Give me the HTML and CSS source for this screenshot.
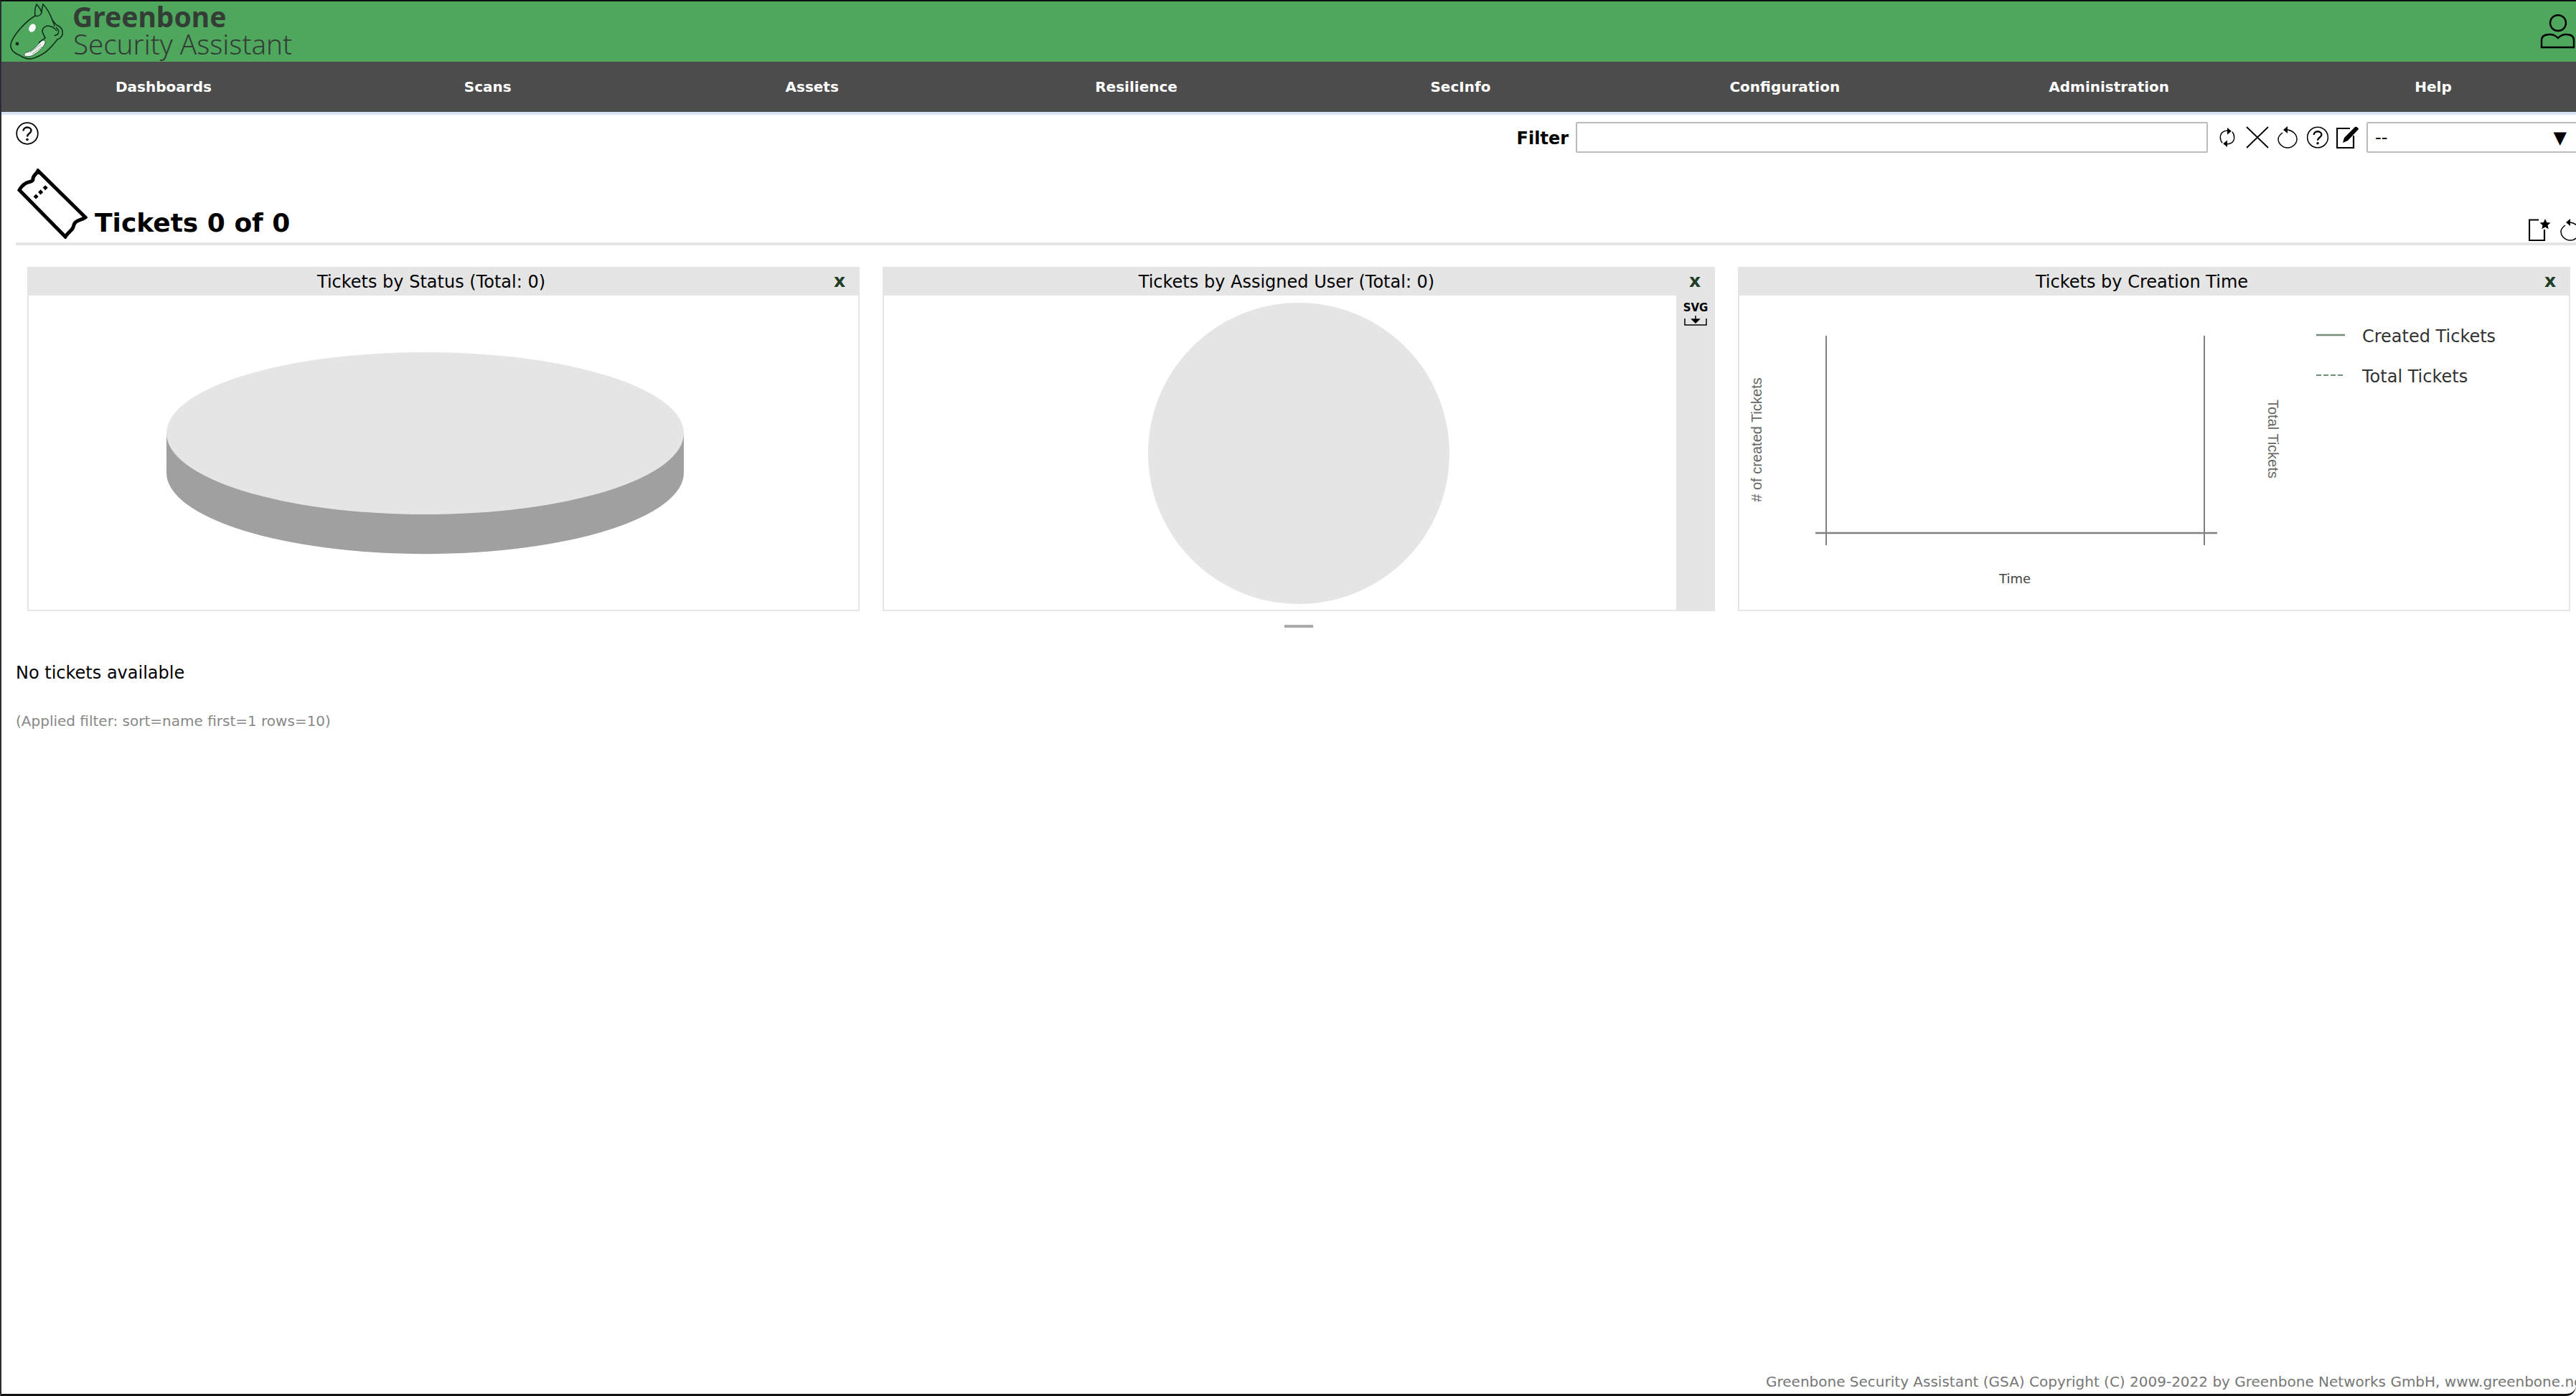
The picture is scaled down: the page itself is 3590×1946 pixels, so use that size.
FILE: index.html
```html
<!DOCTYPE html>
<html lang="en">
<head>
  <meta charset="utf-8">
  <title>Greenbone Security Assistant</title>
  <link rel="stylesheet" href="styles.css">
</head>
<body>
  <div class="app">
    <header class="topbar">
      <div class="brand">
        <svg class="logo" viewBox="12 3 78 81" fill="none" stroke="#12301a" stroke-width="1.600">
          <path d="M49 21c-1-6 0-12 2-16 3 3 6 7 7 12 0-4 1-8 2-12 6 6 10 14 13 22 2 3 4 5 6 7 4 1 8 5 8 9 1 5-2 9-7 11-4 5-9 12-17 18-6 4-13 8-20 9-8 1-13-4-18-6-5-2-9-6-10-11-1-6 4-13 9-20 7-9 15-17 25-23z"/>
          <path d="M49 21c3 1 7 0 9-4M73 27c1 3 3 6 3 9M78 37c3 3 5 5 3 9-2 3-4 1-5 3"/>
          <path d="M79 42c-3-4-8-7-13-7-4 1-7 4-7 8 1 4 3 6 4 9-3 2-7 4-9 7"/>
          <ellipse cx="45" cy="38" rx="4.500" ry="6" transform="rotate(28 45 38)" fill="#fff" stroke="none"/>
          <circle cx="24" cy="60" r="2.400" fill="#12301a" stroke="none"/>
          <path d="M37 72c7-1 14-9 20-15 3-3 7-2 6 2-2 6-10 13-17 17-5 3-14 2-12-1 0-2 1-3 3-3z" fill="#eef5ee" stroke="#2a5a36" stroke-width="1"/>
          <path d="M42 72l15-11M45 74l14-10" stroke="#8aa58f" stroke-width="1"/>
        </svg>
        <div class="brand-text">
          <div class="brand-name">Greenbone</div>
          <div class="brand-sub">Security Assistant</div>
        </div>
      </div>
      <svg class="user-icon" viewBox="0 0 49 48" fill="none" stroke="#000" stroke-width="2.400">
        <circle cx="25" cy="12" r="11"/>
        <path d="M2 46V36c0-6 6-8 12-8 4 0 8 2 11 5 3-3 7-5 11-5 6 0 11 2 11 8v10z"/>
      </svg>
    </header>

    <nav class="mainnav">
      <a>Dashboards</a>
      <a>Scans</a>
      <a>Assets</a>
      <a>Resilience</a>
      <a>SecInfo</a>
      <a>Configuration</a>
      <a>Administration</a>
      <a>Help</a>
    </nav>

    <div class="toolbar">
      <svg class="icon icon-help" viewBox="0 0 32 32" fill="none" stroke="#000" stroke-width="1.800">
        <circle cx="16" cy="16" r="14.800"/>
        <path d="M10.500 12.500c0-3 2.500-5 5.500-5s5.500 2 5.500 4.500c0 4-5.500 4-5.500 8.500" stroke-width="2.400"/>
        <circle cx="16" cy="24.500" r="1.800" fill="#000" stroke="none"/>
      </svg>
      <div class="filter">
        <label class="filter-label">Filter</label>
        <div class="filter-input"></div>
        <div class="filter-icons">
          <svg class="icon icon-f1" viewBox="0 0 24 32" fill="none" stroke="#000" stroke-width="1.500">
            <path d="M15 7C8 5 2 9 2 16c0 3 1 6 3 8M9 25c7 2 13-2 13-9 0-3-1-6-3-8"/>
            <path d="M12 2v10l6-5zM12 30V20l-6 5z" fill="#000" stroke="none"/>
          </svg>
          <svg class="icon icon-f2" viewBox="0 0 32 31" stroke="#000" stroke-width="1.800">
            <path d="M1 1l30 29M31 1L1 30"/>
          </svg>
          <svg class="icon icon-f3" viewBox="0 0 28 31" fill="none" stroke="#000" stroke-width="1.500">
            <path d="M7 9C3 12 1 15 1 18c0 6 6 12 13 12s13-6 13-12c0-7-6-12-13-13"/>
            <path d="M14 0v10L8 5z" fill="#000" stroke="none"/>
          </svg>
          <svg class="icon icon-f4" viewBox="0 0 32 32" fill="none" stroke="#000" stroke-width="1.600">
            <circle cx="16" cy="16" r="14.800"/>
            <path d="M10.500 12.500c0-3 2.500-5 5.500-5s5.500 2 5.500 4.500c0 4-5.500 4-5.500 8.500" stroke-width="2.400"/>
            <circle cx="16" cy="24.500" r="1.800" fill="#000" stroke="none"/>
          </svg>
          <svg class="icon icon-f5" viewBox="0 0 32 31" fill="none" stroke="#000" stroke-width="2.200">
            <path d="M19 3H1v27h23V13"/>
            <path d="M9 23l2-7L26 1c1-1 5 1 5 3L16 20z" fill="#000" stroke="none"/>
          </svg>
        </div>
        <div class="filter-select"><span>--</span><span class="select-arrow">▼</span></div>
      </div>
    </div>

    <div class="section-head">
      <div class="section-title">
        <svg class="ticket-icon" viewBox="0 0 98 98" fill="none" stroke="#000" stroke-width="5">
          <path d="M29 3c-2 5-8 7-7 12 0 4-7 3-11 6-3 2-6 5-8 9l64 65c2-3 5-6 8-9 5-4 2-7 6-11 4-4 9-3 14-7z"/>
          <path d="M41 25L24 41" stroke-dasharray="5 4" stroke-width="5"/>
        </svg>
        <h1>Tickets 0 of 0</h1>
      </div>
      <div class="section-tools">
        <svg class="icon icon-new" viewBox="0 0 31 31" fill="none" stroke="#000" stroke-width="2.200">
          <path d="M14 1.500H1V30h21V15"/>
          <path d="M23 0l2.200 5 5.300.4-4 3.600 1.200 5.200-4.700-2.800-4.700 2.800 1.200-5.200-4-3.600 5.300-.4z" fill="#000" stroke="none"/>
        </svg>
        <svg class="icon icon-reload" viewBox="0 0 28 31" fill="none" stroke="#000" stroke-width="1.500">
          <path d="M7 9C3 12 1 15 1 18c0 6 6 12 13 12s13-6 13-12c0-7-6-12-13-13"/>
          <path d="M14 0v10L8 5z" fill="#000" stroke="none"/>
        </svg>
      </div>
    </div>

    <div class="dashboard">
      <section class="panel">
        <div class="panel-head"><span class="panel-title">Tickets by Status (Total: 0)</span><span class="panel-close">x</span></div>
        <div class="panel-body">
          <svg class="chart" viewBox="0 0 1156 438">
            <path d="M192 192v55a360 113 0 0 0 721 0v-55z" fill="#a0a0a0"/>
            <ellipse cx="552.500" cy="192" rx="360.500" ry="113" fill="#e5e5e5"/>
          </svg>
        </div>
      </section>

      <section class="panel">
        <div class="panel-head"><span class="panel-title">Tickets by Assigned User (Total: 0)</span><span class="panel-close">x</span></div>
        <div class="panel-body panel-body-split">
          <svg class="chart" viewBox="0 0 1104 438">
            <circle cx="578" cy="220" r="210" fill="#e5e5e5"/>
          </svg>
          <div class="panel-side">
            <span class="svg-label">SVG</span>
            <svg class="svg-tray" viewBox="0 0 32 14" fill="none" stroke="#000" stroke-width="1.500">
              <path d="M1 4v9h30V4"/>
              <path d="M16 0v7M11 5h10l-5 5z" fill="#000" stroke="#000"/>
            </svg>
          </div>
        </div>
      </section>

      <section class="panel">
        <div class="panel-head"><span class="panel-title">Tickets by Creation Time</span><span class="panel-close">x</span></div>
        <div class="panel-body">
          <svg class="chart" viewBox="0 0 1156 438">
            <g stroke="#808080" stroke-width="2">
              <path d="M121 56v292M648 56v292"/>
              <path d="M106 331h560" stroke-width="2.500"/>
            </g>
            <path d="M804 55h40" stroke="#768a78" stroke-width="2.500"/>
            <path d="M804 111h37" stroke="#6f8f75" stroke-width="2" stroke-dasharray="7 3"/>
            <text class="legend-text" x="868" y="65">Created Tickets</text>
            <text class="legend-text" x="868" y="121">Total Tickets</text>
            <text class="axis-text" text-anchor="middle" transform="translate(31 201) rotate(-90)"># of created Tickets</text>
            <text class="axis-text" text-anchor="middle" transform="translate(737 200) rotate(90)">Total Tickets</text>
            <text class="axis-time" text-anchor="middle" x="384" y="401">Time</text>
          </svg>
        </div>
      </section>
    </div>
    <div class="dash-handle"></div>

    <main class="content">
      <p class="empty">No tickets available</p>
      <p class="applied">(Applied filter: sort=name first=1 rows=10)</p>
    </main>

    <footer class="footer">Greenbone Security Assistant (GSA) Copyright (C) 2009-2022 by Greenbone Networks GmbH, www.greenbone.net</footer>
  </div>
</body>
</html>
```

FILE: styles.css
```css
html, body {
  margin: 0;
  padding: 0;
  background: #fff;
  overflow: hidden;
}
.app {
  box-sizing: border-box;
  width: 3590px;
  height: 1946px;
  display: flex;
  flex-direction: column;
  overflow: hidden;
  border-top: 2px solid #111;
  border-left: 2px solid #2a2d33;
  border-bottom: 3px solid #111;
  border-bottom-right-radius: 14px;
  font-family: "DejaVu Sans", sans-serif;
  font-size: 24px;
  color: #000;
}

/* header */
.topbar {
  flex: none;
  height: 84px;
  background: #4fa75e;
  display: flex;
  justify-content: space-between;
  align-items: center;
}
.brand {
  display: flex;
  align-items: center;
  margin-left: 10px;
  gap: 11px;
}
.logo {
  width: 78px;
  height: 81px;
}
.brand-text {
  color: #333d36;
  font-family: "Noto Sans", sans-serif;
  margin-top: -4px;
}
.brand-name {
  font-size: 39px;
  line-height: 36px;
  margin-bottom: 2px;
  font-weight: 700;
}
.brand-sub {
  font-size: 38.5px;
  line-height: 36px;
  margin-left: 1px;
  font-weight: 300;
}
.user-icon {
  width: 49px;
  height: 48px;
  margin-right: 1px;
}

/* nav */
.mainnav {
  flex: none;
  width: 3615px;
  height: 70px;
  background: #4c4c4c;
  border-bottom: 4px solid #d8e3f8;
  display: grid;
  grid-template-columns: repeat(8, 1fr);
  align-items: center;
  text-align: center;
  color: #fff;
  font-size: 20px;
  font-weight: 700;
}

/* filter bar */
.toolbar {
  flex: none;
  height: 53px;
  padding-top: 10px;
  display: flex;
  justify-content: space-between;
  align-items: flex-start;
}
.icon { display: block; flex: none; }
.icon-help {
  width: 32px;
  height: 32px;
  margin-left: 20px;
}
.filter {
  display: flex;
  align-items: flex-start;
  margin-right: -8px;
}
.filter-label {
  font-weight: 700;
  font-size: 24px;
  line-height: 46px;
  margin-right: 10px;
}
.filter-input, .filter-select {
  box-sizing: border-box;
  height: 43px;
  border: 2px solid #bbb;
  border-radius: 2px;
  background: #fff;
}
.filter-input { width: 881px; }
.filter-icons {
  display: flex;
  margin: 6px 10px 0 15px;
}
.icon-f1 { width: 24px; height: 31px; margin-right: 14px; }
.icon-f2 { width: 32px; height: 31px; margin-right: 12px; }
.icon-f3 { width: 28px; height: 31px; margin-right: 12px; }
.icon-f4 { width: 32px; height: 31px; margin-right: 10px; }
.icon-f5 { width: 32px; height: 31px; }
.filter-select {
  width: 300px;
  display: flex;
  justify-content: space-between;
  align-items: center;
  padding: 0 19px 0 10px;
  font-size: 24px;
}
.select-arrow { font-size: 24px; }

/* title row */
.section-head {
  flex: none;
  height: 119px;
  margin-left: 20px;
  border-bottom: 4px solid #e5e5e5;
  display: flex;
  justify-content: space-between;
  align-items: flex-end;
  box-sizing: border-box;
  padding-bottom: 2px;
}
.section-title {
  display: flex;
  align-items: flex-end;
}
.ticket-icon {
  width: 98px;
  height: 98px;
  margin-left: 2px;
  margin-bottom: 3px;
}
.section-title h1 {
  margin: 0 0 5px 10px;
  font-size: 36px;
  line-height: 40px;
  font-weight: 700;
}
.section-tools {
  display: flex;
  gap: 13px;
  margin-right: -6px;
}
.icon-new { width: 31px; height: 31px; }
.icon-reload { width: 28px; height: 31px; }

/* dashboard */
.dashboard {
  flex: none;
  display: flex;
  gap: 32px;
  margin: 30px 0 0 36px;
}
.panel {
  width: 1160px;
  height: 480px;
  box-sizing: border-box;
  border: 2px solid #e5e5e5;
  border-top: 0;
  display: flex;
  flex-direction: column;
}
.panel-head {
  flex: none;
  height: 40px;
  margin: 0 -2px;
  background: #e5e5e5;
  display: flex;
  align-items: center;
}
.panel-title {
  flex: 1;
  text-align: center;
  padding: 2px 0 0 22px;
}
.panel-close {
  width: 56px;
  text-align: center;
  font-size: 25px;
  line-height: 36px;
  font-weight: 700;
  color: #1f3d27;
}
.panel-body {
  flex: 1;
  display: flex;
  min-height: 0;
}
.chart {
  display: block;
  width: 1156px;
  height: 438px;
}
.panel-body-split .chart { width: 1104px; }
.panel-side {
  flex: 1;
  margin-right: -2px;
  margin-bottom: -2px;
  background: #e5e5e5;
  display: flex;
  flex-direction: column;
  align-items: center;
  padding-top: 9px;
}
.svg-label {
  font-size: 15px;
  font-weight: 700;
  line-height: 16px;
}
.svg-tray {
  width: 32px;
  height: 14px;
  margin-top: 3px;
}
.legend-text {
  font-family: "DejaVu Sans", sans-serif;
  font-size: 24px;
  fill: #333;
}
.axis-text {
  font-family: "Liberation Sans", sans-serif;
  font-size: 20px;
  fill: #666;
}
.axis-time {
  font-family: "DejaVu Sans", sans-serif;
  font-size: 18px;
  fill: #444;
}
.dash-handle {
  flex: none;
  width: 40px;
  height: 4px;
  margin: 19px 0 0 1788px;
  background: #aaa;
}

/* content */
.content {
  flex: 1;
  margin-left: 20px;
}
.empty {
  margin: 50px 0 0;
  line-height: 26px;
}
.applied {
  margin: 43px 0 0;
  font-size: 20px;
  line-height: 22px;
  color: #888;
}
.footer {
  flex: none;
  height: 28px;
  margin-left: 2459px;
  white-space: nowrap;
  font-size: 20px;
  line-height: 22px;
  color: #777;
}
```
